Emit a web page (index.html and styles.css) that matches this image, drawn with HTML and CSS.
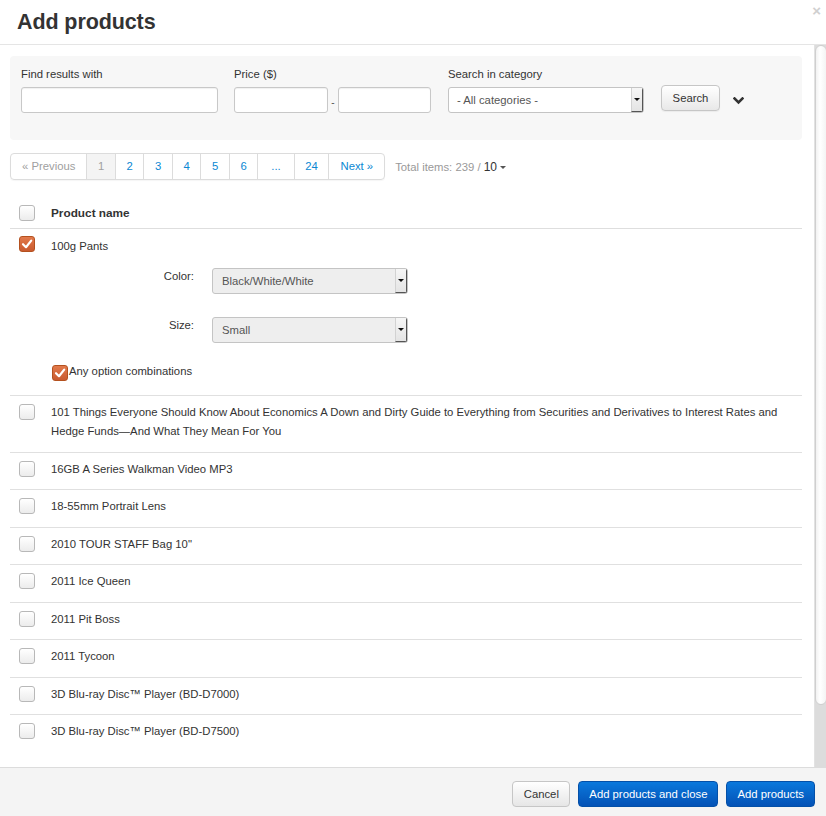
FILE: index.html
```html
<!DOCTYPE html>
<html>
<head>
<meta charset="utf-8">
<link rel="stylesheet" href="styles.css">
</head>
<body>
<div class="modal">
  <div class="mhead">
    <h1 class="title">Add products</h1>
    <span class="close">×</span>
  </div>
  <div class="mbody">
    <div class="content">
      <div class="panel">
        <div class="field">
          <label class="lbl">Find results with</label>
          <div class="inp w-find"></div>
        </div>
        <div class="field">
          <label class="lbl">Price ($)</label>
          <div class="price">
            <div class="inp w-p1"></div>
            <span class="dash">-</span>
            <div class="inp w-p2"></div>
          </div>
        </div>
        <div class="field">
          <label class="lbl">Search in category</label>
          <div class="sel w-cat"><span class="seltext">- All categories -</span><span class="arr"><i class="tri"></i></span></div>
        </div>
        <div class="btn btn-search">Search</div>
        <svg class="chev" width="11" height="8" viewBox="0 0 11 8"><path d="M1.5 1.5 L5.5 5.5 L9.5 1.5" fill="none" stroke="#333" stroke-width="2.6" stroke-linecap="square"/></svg>
      </div>

      <div class="pagerow">
        <div class="pager">
          <span class="pg prev">« Previous</span>
          <span class="pg active">1</span>
          <span class="pg">2</span>
          <span class="pg">3</span>
          <span class="pg">4</span>
          <span class="pg">5</span>
          <span class="pg">6</span>
          <span class="pg ell">...</span>
          <span class="pg">24</span>
          <span class="pg next">Next »</span>
        </div>
        <div class="total">Total items: 239 / <span class="per">10</span><i class="caret"></i></div>
      </div>

      <div class="table">
        <div class="thead">
          <span class="cb"></span>
          <span class="th">Product name</span>
        </div>
        <div class="row row-open">
          <span class="cb on"><svg width="14" height="14" viewBox="0 0 14 14"><path d="M3 7.2 L6 10.2 L11.2 3.6" fill="none" stroke="#fff" stroke-width="2.2" stroke-linecap="round" stroke-linejoin="round"/></svg></span>
          <div class="name">
            <div class="pname">100g Pants</div>
            <div class="opts">
              <label class="olbl">Color:</label>
              <div class="sel osel"><span class="seltext">Black/White/White</span><span class="arr"><i class="tri"></i></span></div>
              <label class="olbl">Size:</label>
              <div class="sel osel"><span class="seltext">Small</span><span class="arr"><i class="tri"></i></span></div>
            </div>
            <div class="anyopt">
              <span class="cb on"><svg width="14" height="14" viewBox="0 0 14 14"><path d="M3 7.2 L6 10.2 L11.2 3.6" fill="none" stroke="#fff" stroke-width="2.2" stroke-linecap="round" stroke-linejoin="round"/></svg></span>
              <span class="anytext">Any option combinations</span>
            </div>
          </div>
        </div>
        <div class="row"><span class="cb"></span><div class="name">101 Things Everyone Should Know About Economics A Down and Dirty Guide to Everything from Securities and Derivatives to Interest Rates and Hedge Funds—And What They Mean For You</div></div>
        <div class="row"><span class="cb"></span><div class="name">16GB A Series Walkman Video MP3</div></div>
        <div class="row"><span class="cb"></span><div class="name">18-55mm Portrait Lens</div></div>
        <div class="row"><span class="cb"></span><div class="name">2010 TOUR STAFF Bag 10"</div></div>
        <div class="row"><span class="cb"></span><div class="name">2011 Ice Queen</div></div>
        <div class="row"><span class="cb"></span><div class="name">2011 Pit Boss</div></div>
        <div class="row"><span class="cb"></span><div class="name">2011 Tycoon</div></div>
        <div class="row"><span class="cb"></span><div class="name">3D Blu-ray Disc™ Player (BD-D7000)</div></div>
        <div class="row last"><span class="cb"></span><div class="name">3D Blu-ray Disc™ Player (BD-D7500)</div></div>
      </div>
    </div>
    <div class="scrollbar"><div class="thumb"></div></div>
  </div>
  <div class="mfoot">
    <div class="btn btn-cancel">Cancel</div>
    <div class="btn btn-blue">Add products and close</div>
    <div class="btn btn-blue">Add products</div>
  </div>
</div>
</body>
</html>
```

FILE: styles.css
```css
* { box-sizing: border-box; }
html, body { margin: 0; padding: 0; }
body {
  width: 826px;
  height: 816px;
  overflow: hidden;
  background: #fff;
  font-family: "Liberation Sans", Arial, sans-serif;
  font-size: 11.3px;
  color: #333;
}
.modal {
  width: 826px;
  height: 816px;
  display: flex;
  flex-direction: column;
}
.mhead {
  position: relative;
  height: 45px;
  flex: none;
  border-bottom: 1px solid #e5e5e5;
  padding: 9px 0 0 17px;
}
.title {
  margin: 0;
  font-size: 21.5px;
  line-height: 26px;
  font-weight: bold;
  color: #333;
  letter-spacing: -0.1px;
}
.close {
  position: absolute;
  top: 3px;
  right: 5px;
  font-size: 15px;
  font-weight: bold;
  color: #d0d0d0;
  line-height: 16px;
}
.mbody {
  flex: 1;
  display: flex;
  overflow: hidden;
}
.content {
  flex: 1;
  padding: 11px 12px 0 10px;
  overflow: hidden;
}
.scrollbar {
  width: 12px;
  flex: none;
  background: #dcdcdc;
  border-left: 1px solid #e2e2e2;
}
.thumb {
  height: 660px;
  background: linear-gradient(to right, #f2f2f2, #fff 40%, #f4f4f4);
  border: 1px solid #cfcfcf;
  border-radius: 6px;
  margin-right: -1px;
}

/* search panel */
.panel {
  height: 84px;
  background: #f7f7f7;
  border-radius: 4px;
  padding: 11px 11px 0 11px;
  display: flex;
  align-items: flex-start;
}
.field { display: flex; flex-direction: column; margin-right: 16px; }
.lbl { line-height: 14px; height: 14px; margin-bottom: 6px; color: #333; }
.inp {
  height: 26px;
  background: #fff;
  border: 1px solid #c8c8c8;
  border-radius: 3px;
  box-shadow: inset 0 1px 1px rgba(0,0,0,0.06);
}
.w-find { width: 197px; }
.w-p1 { width: 94px; }
.w-p2 { width: 93px; }
.price { display: flex; align-items: flex-end; }
.dash { width: 10px; text-align: center; font-size: 10px; line-height: 12px; color: #555; padding-bottom: 4px; }
.field:nth-child(2) { margin-right: 17px; }
.sel {
  height: 26px;
  display: flex;
  align-items: center;
  background: #fff;
  border: 1px solid #c4c4c4;
  border-radius: 3px;
  overflow: hidden;
}
.w-cat { width: 196px; }
.seltext { flex: 1; padding-left: 8px; color: #555; }
.arr {
  width: 12px;
  height: 100%;
  background: linear-gradient(#f6f6f6, #e4e4e4);
  border-left: 1px solid #d2d2d2;
  border-right: 1px solid #555;
  border-bottom: 1px solid #555;
  display: flex;
  align-items: center;
  justify-content: center;
}
.tri {
  display: block;
  width: 0; height: 0;
  border-left: 3px solid transparent;
  border-right: 3px solid transparent;
  border-top: 3px solid #111;
}
.btn {
  height: 26px;
  line-height: 24px;
  border-radius: 4px;
  text-align: center;
  white-space: nowrap;
}
.btn-search {
  margin-top: 18px;
  margin-left: 1px;
  width: 59px;
  background: linear-gradient(#fff, #e8e8e8);
  border: 1px solid #c6c6c6;
  color: #333;
  box-shadow: 0 1px 1px rgba(0,0,0,0.05);
}
.chev { margin-top: 30px; margin-left: 13px; }

/* pagination */
.pagerow {
  display: flex;
  align-items: center;
  margin-top: 13px;
}
.pager {
  display: flex;
  height: 27px;
  border: 1px solid #dcdcdc;
  border-radius: 4px;
  overflow: hidden;
  box-shadow: 0 1px 1px rgba(0,0,0,0.04);
}
.pg {
  padding: 0 10.6px;
  line-height: 25px;
  color: #0a88d3;
  border-left: 1px solid #dcdcdc;
  text-align: center;
}
.pg:first-child { border-left: none; }
.pg.prev { color: #a0a0a0; padding: 0 11px; }
.pg.active { background: #f4f4f4; color: #a0a0a0; }
.pg.ell { padding: 0 13px; }
.pg.next { padding: 0 11px; }
.total { margin-left: 10px; color: #999; }
.per { color: #333; font-size: 12px; }
.caret {
  display: inline-block;
  margin-left: 3px;
  vertical-align: middle;
  border-left: 3px solid transparent;
  border-right: 3px solid transparent;
  border-top: 3px solid #555;
}

/* table */
.table { margin-top: 15px; }
.thead {
  display: flex;
  align-items: flex-start;
  padding: 10px 0 7px 9px;
  border-bottom: 1px solid #dedede;
}
.th { font-weight: bold; font-size: 11.8px; line-height: 16px; margin-left: 16px; color: #333; }
.cb {
  flex: none;
  width: 16px;
  height: 16px;
  border: 1px solid #b8b8b8;
  border-radius: 3px;
  background: linear-gradient(#fff, #ececec);
  display: flex;
  align-items: center;
  justify-content: center;
}
.cb.on {
  background: linear-gradient(#e27a4b, #c95a2f);
  border-color: #b4511f;
}
.row {
  display: flex;
  align-items: flex-start;
  padding: 6px 0 11.5px 9px;
  border-bottom: 1px solid #e0e0e0;
}
.row.last { border-bottom: none; }
.row .cb { margin-top: 2px; }
.name {
  margin-left: 16px;
  line-height: 19px;
  color: #333;
  padding-right: 6px;
  margin-top: 1px;
  margin-bottom: -1px;
}
.row-open { padding-top: 7px; padding-bottom: 14px; }
.row-open .cb { margin-top: 0; }
.row-open .name { margin-top: 0; margin-bottom: 0; }
.pname { line-height: 18px; padding-top: 1px; }
.opts {
  margin-top: 13px;
  display: grid;
  grid-template-columns: 143px 196px;
  column-gap: 18px;
  row-gap: 23px;
}
.olbl { text-align: right; line-height: 17px; }
.osel { background: #eee; }
.osel .seltext { padding-left: 9px; }
.anyopt {
  margin-top: 22px;
  margin-left: 1px;
  display: flex;
  align-items: flex-start;
}
.anyopt .cb { margin-top: 0; }
.anytext { line-height: 13px; margin-left: 1px; }

/* footer */
.mfoot {
  height: 49px;
  flex: none;
  border-top: 1px solid #dcdcdc;
  background: #f4f4f4;
  display: flex;
  justify-content: flex-end;
  align-items: flex-start;
  padding: 13px 11px 0 0;
  gap: 8px;
}
.btn-cancel {
  width: 58px;
  background: linear-gradient(#fff, #e6e6e6);
  border: 1px solid #c6c6c6;
  color: #333;
}
.btn-blue {
  padding: 0 10px;
  background: linear-gradient(#0a78dc, #0452b6);
  border: 1px solid #0450a8;
  color: #fff;
}
```
